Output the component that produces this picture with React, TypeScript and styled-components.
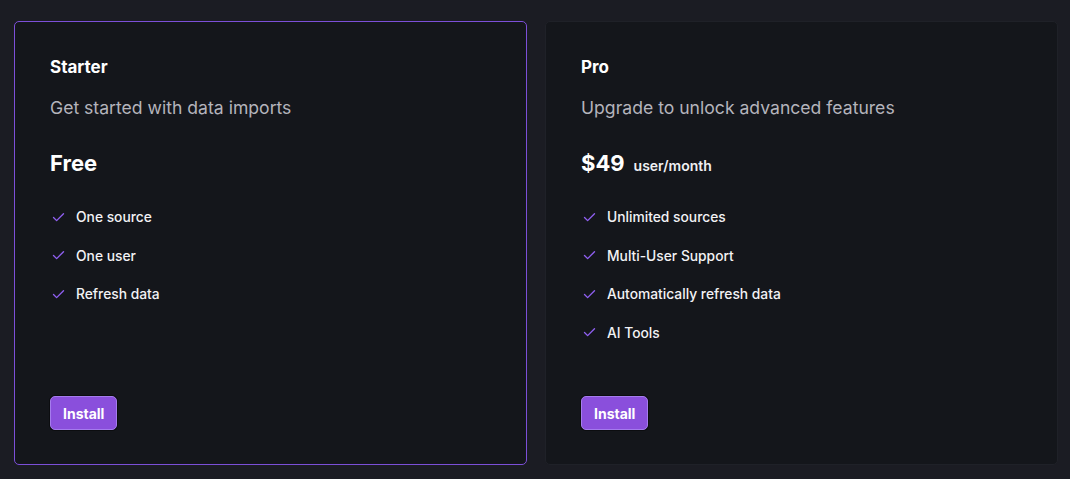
import React from "react";
import styled, { createGlobalStyle } from "styled-components";
import { Check } from "lucide-react";

const GlobalStyle = createGlobalStyle`
  * { box-sizing: border-box; }
  body {
    margin: 0;
    background: #1b1c23;
    font-family: Inter, "Noto Sans", sans-serif;
    color: #f5f5f7;
  }
`;

type Plan = {
  name: string;
  description: string;
  price: string;
  unit?: string;
  features: string[];
  highlighted?: boolean;
};

const plans: Plan[] = [
  {
    name: "Starter",
    description: "Get started with data imports",
    price: "Free",
    features: ["One source", "One user", "Refresh data"],
    highlighted: true,
  },
  {
    name: "Pro",
    description: "Upgrade to unlock advanced features",
    price: "$49",
    unit: "user/month",
    features: [
      "Unlimited sources",
      "Multi-User Support",
      "Automatically refresh data",
      "AI Tools",
    ],
  },
];

export default function App() {
  return (
    <>
      <GlobalStyle />
      <Page>
        {plans.map((plan) => (
          <Card key={plan.name} $highlighted={plan.highlighted}>
            <Title>{plan.name}</Title>
            <Description>{plan.description}</Description>
            <PriceRow>
              <Price>{plan.price}</Price>
              {plan.unit && <Unit>{plan.unit}</Unit>}
            </PriceRow>
            <Features>
              {plan.features.map((f) => (
                <Feature key={f}>
                  <Check size={15} strokeWidth={2.2} color="#8f5ff0" />
                  <span>{f}</span>
                </Feature>
              ))}
            </Features>
            <InstallButton>Install</InstallButton>
          </Card>
        ))}
      </Page>
    </>
  );
}

const Page = styled.div`
  display: grid;
  grid-template-columns: 1fr 1fr;
  gap: 18px;
  width: 1070px;
  height: 479px;
  padding: 21px 12px 14px 14px;
`;

const Card = styled.div<{ $highlighted?: boolean }>`
  display: flex;
  flex-direction: column;
  background: #14161b;
  border: 1px solid ${(p) => (p.$highlighted ? "#7c4fd8" : "#1f2128")};
  border-radius: 5px;
  padding: 35px 35px 34px;
`;

const Title = styled.h2`
  margin: 0;
  font-size: 17px;
  line-height: 20px;
  font-weight: 700;
  color: #ffffff;
`;

const Description = styled.p`
  margin: 17px 0 0;
  font-size: 17.6px;
  line-height: 28px;
  font-weight: 400;
  color: #b4b4bc;
`;

const PriceRow = styled.div`
  display: flex;
  align-items: baseline;
  gap: 9px;
  margin-top: 25px;
`;

const Price = styled.span`
  font-size: 22px;
  line-height: 32px;
  font-weight: 700;
  color: #ffffff;
`;

const Unit = styled.span`
  font-size: 14px;
  font-weight: 600;
  color: #f0f0f3;
`;

const Features = styled.ul`
  list-style: none;
  margin: 28px 0 0;
  padding: 0;
  display: flex;
  flex-direction: column;
  gap: 18.5px;
`;

const Feature = styled.li`
  display: flex;
  align-items: center;
  gap: 10px;
  font-size: 13.8px;
  line-height: 20px;
  font-weight: 500;
  color: #f2f2f5;

  svg {
    margin-left: 1px;
  }
`;

const InstallButton = styled.button`
  margin-top: auto;
  align-self: flex-start;
  height: 34px;
  padding: 0 12px;
  background: #8a4fdc;
  border: 1px solid #a57ced;
  border-radius: 5px;
  box-shadow: 0 0 0 1px #0c0d10;
  font-family: inherit;
  font-size: 14px;
  font-weight: 700;
  color: #ffffff;
  cursor: pointer;
`;
